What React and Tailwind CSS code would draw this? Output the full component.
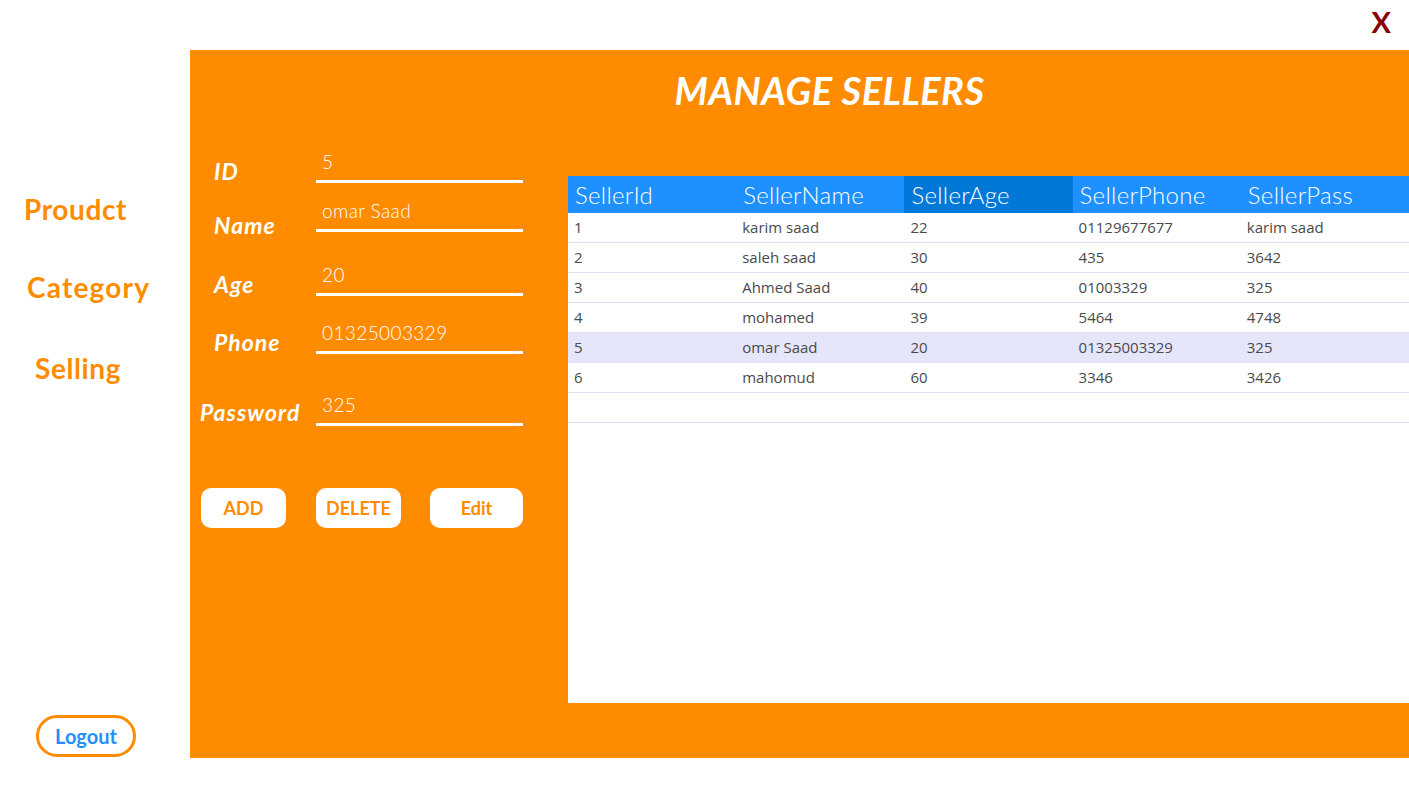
import React from "react";

const rows = [
  ["1", "karim saad", "22", "01129677677", "karim saad"],
  ["2", "saleh saad", "30", "435", "3642"],
  ["3", "Ahmed Saad", "40", "01003329", "325"],
  ["4", "mohamed", "39", "5464", "4748"],
  ["5", "omar Saad", "20", "01325003329", "325"],
  ["6", "mahomud", "60", "3346", "3426"],
];

const headers = ["SellerId", "SellerName", "SellerAge", "SellerPhone", "SellerPass"];

function Field({ label, value, rowMt, labelMt, labelPl }) {
  return (
    <div className="flex items-start h-[36px]" style={{ marginTop: rowMt }}>
      <div className="w-[126px] shrink-0 whitespace-nowrap" style={{ paddingLeft: labelPl, marginTop: labelMt }}>
        <span className="text-[23px] leading-[28px] font-bold italic text-white tracking-[1px]">{label}</span>
      </div>
      <div className="w-[207px] h-[36px] border-b-[3px] border-white flex items-start pl-[6px] pt-[2px]">
        <span className="text-[19px] leading-[26px] font-light text-white tracking-[0.4px]">{value}</span>
      </div>
    </div>
  );
}

export default function App() {
  return (
    <div
      className="w-[1409px] h-[802px] bg-white overflow-hidden flex flex-col"
      style={{ fontFamily: "Lato, 'Open Sans', sans-serif" }}
    >
      <div className="h-[50px] flex justify-end items-start pr-[18px] pt-[6px]">
        <span className="text-[29px] leading-[32px] font-bold text-[#8b0000]">X</span>
      </div>
      <div className="flex h-[708px]">
        <div className="w-[190px] shrink-0 flex flex-col">
          <div className="pl-[24px] mt-[142px] text-[28px] leading-[34px] font-bold text-[#ff8c00] tracking-[0.6px]">Proudct</div>
          <div className="pl-[27px] mt-[44px] text-[28px] leading-[34px] font-bold text-[#ff8c00] tracking-[1.2px]">Category</div>
          <div className="pl-[35px] mt-[47px] text-[28px] leading-[34px] font-bold text-[#ff8c00] tracking-[0.6px]">Selling</div>
          <div className="mt-auto mb-[1px] ml-[36px] w-[100px] h-[42px] rounded-full border-[3px] border-[#ff8c00] flex items-center justify-center">
            <span className="text-[20px] font-bold text-[#1e90ff]">Logout</span>
          </div>
        </div>
        <div className="flex-1 bg-[#ff8c00] flex flex-col">
          <div className="h-[80px] flex items-center justify-center pl-[60px]">
            <h1 className="text-[38px] font-bold italic text-white tracking-[0.5px]">MANAGE SELLERS</h1>
          </div>
          <div className="flex flex-1">
            <div className="w-[378px] shrink-0 flex flex-col">
              <Field label="ID" value="5" rowMt={17} labelMt={10} labelPl={24} />
              <Field label="Name" value="omar Saad" rowMt={13} labelMt={15} labelPl={24} />
              <Field label="Age" value="20" rowMt={28} labelMt={10} labelPl={24} />
              <Field label="Phone" value="01325003329" rowMt={22} labelMt={10} labelPl={24} />
              <Field label="Password" value="325" rowMt={36} labelMt={8} labelPl={10} />
              <div className="flex mt-[62px] pl-[11px]">
                <button className="w-[85px] h-[40px] rounded-[10px] bg-white text-[#ff8c00] text-[18px] font-bold">ADD</button>
                <button className="ml-[30px] w-[85px] h-[40px] rounded-[10px] bg-white text-[#ff8c00] text-[18px] font-bold">DELETE</button>
                <button className="ml-[29px] w-[93px] h-[40px] rounded-[10px] bg-white text-[#ff8c00] text-[18px] font-bold">Edit</button>
              </div>
            </div>
            <div className="flex-1 mt-[46px] mb-[55px] bg-white flex flex-col">
              <div className="grid grid-cols-5 h-[37px] bg-[#1e90ff]">
                {headers.map((h, i) => (
                  <div
                    key={h}
                    className={
                      i === 2
                        ? "bg-[#0078d7] pl-[7px] flex items-center text-[24px] font-light text-white tracking-[0.3px]"
                        : "pl-[7px] flex items-center text-[24px] font-light text-white tracking-[0.3px]"
                    }
                  >
                    {h}
                  </div>
                ))}
              </div>
              {rows.map((r, ri) => (
                <div
                  key={ri}
                  className={
                    ri === 4
                      ? "grid grid-cols-5 h-[30px] bg-[#e6e6fa] border-b border-[#e2e0f7]"
                      : "grid grid-cols-5 h-[30px] border-b border-[#e2e0f7]"
                  }
                  style={{ fontFamily: "'Open Sans', 'Noto Sans', sans-serif" }}
                >
                  {r.map((c, ci) => (
                    <div key={ci} className="pl-[6px] flex items-center text-[15px] text-[#4a4a4a]">
                      {c}
                    </div>
                  ))}
                </div>
              ))}
              <div className="h-[30px] border-b border-[#e2e0f7]" />
            </div>
          </div>
        </div>
      </div>
    </div>
  );
}
